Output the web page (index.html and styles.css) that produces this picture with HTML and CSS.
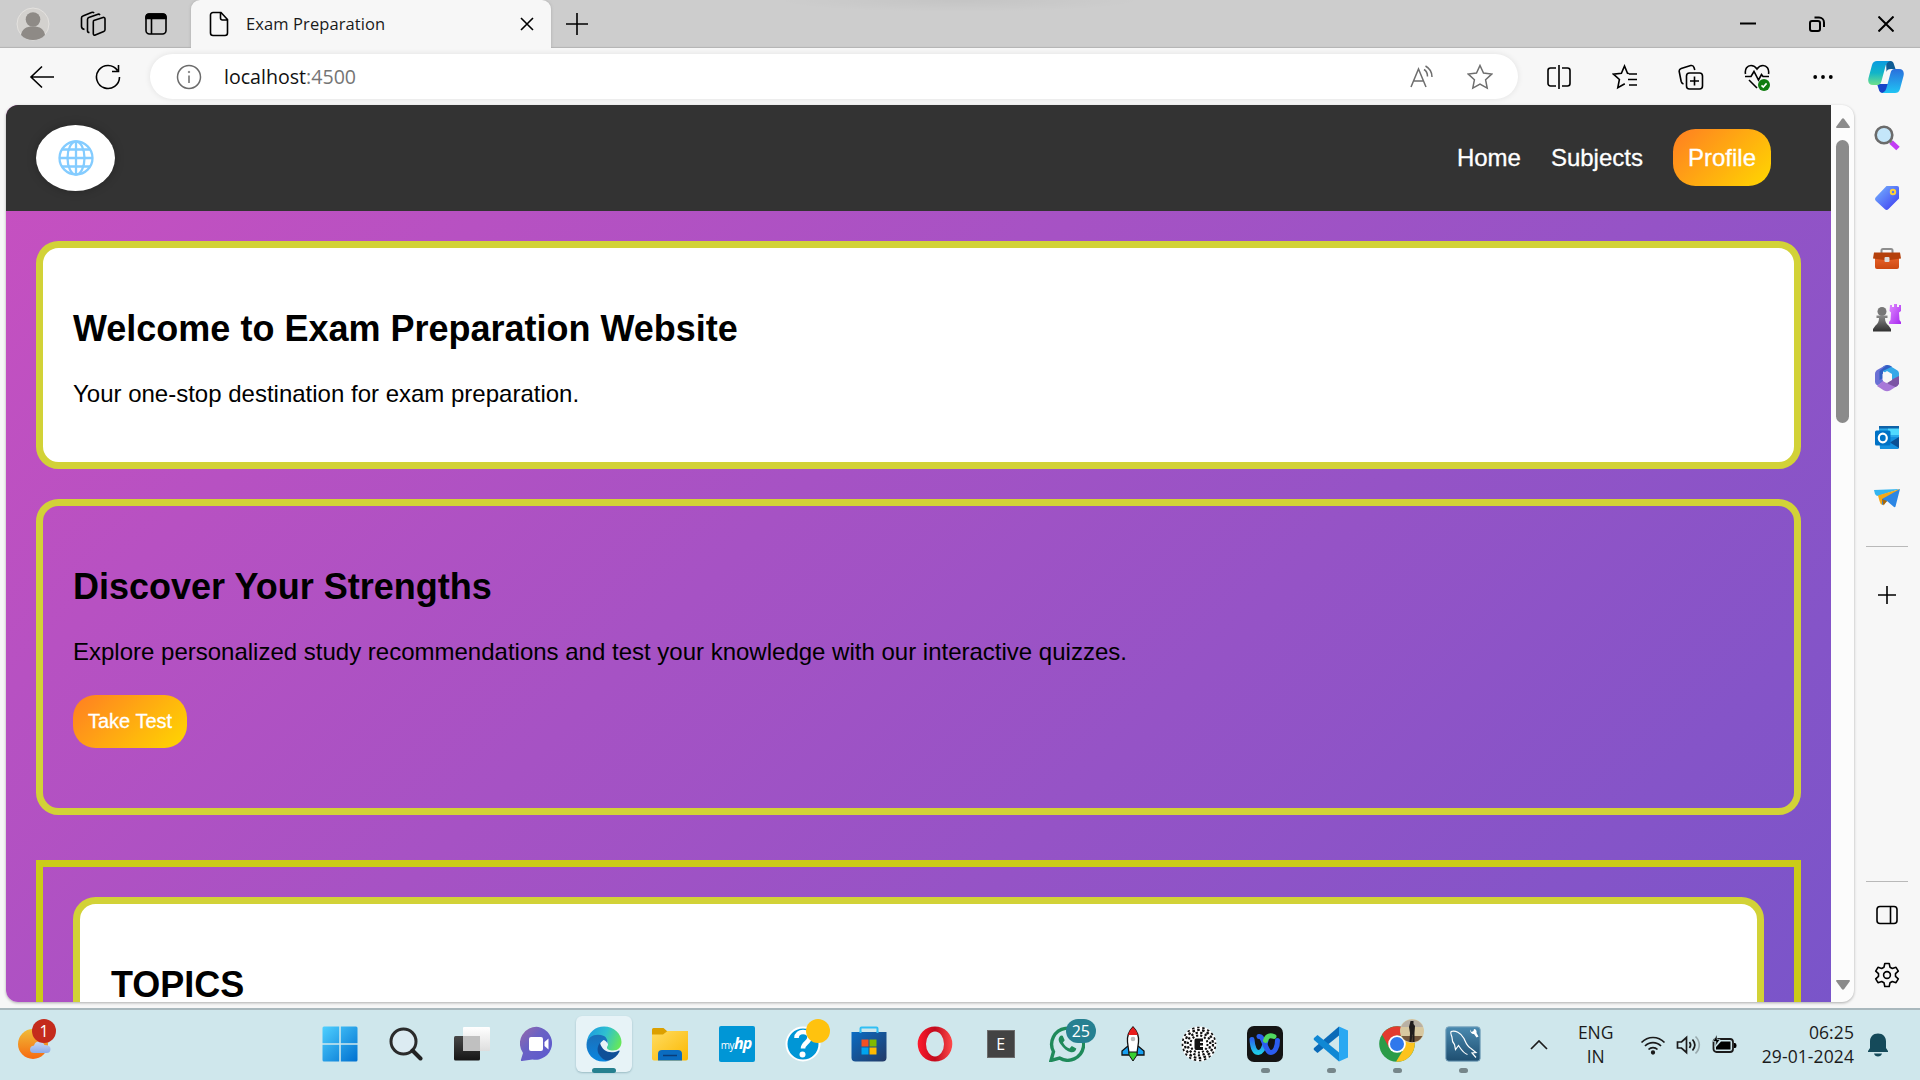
FILE: index.html
```html
<!DOCTYPE html>
<html lang="en">
<head>
<meta charset="utf-8">
<title>Exam Preparation</title>
<link rel="stylesheet" href="styles.css">
</head>
<body>
<svg class="defs" width="0" height="0">
  <defs>
    <linearGradient id="blueA" x1="0" y1="0" x2="1" y2="1"><stop offset="0" stop-color="#4fd0ff"/><stop offset="1" stop-color="#0070d0"/></linearGradient>
    <linearGradient id="tagG" x1="0" y1="0" x2="1" y2="1"><stop offset="0" stop-color="#78b8ff"/><stop offset="1" stop-color="#3a36f0"/></linearGradient>
    <linearGradient id="pinkG" x1="0" y1="0" x2="1" y2="1"><stop offset="0" stop-color="#e08cff"/><stop offset="1" stop-color="#a828f0"/></linearGradient>
    <linearGradient id="darkG" x1="0" y1="0" x2="0" y2="1"><stop offset="0" stop-color="#8a8a8a"/><stop offset="1" stop-color="#303030"/></linearGradient>
    <linearGradient id="redG" x1="0" y1="0" x2="0" y2="1"><stop offset="0" stop-color="#e8622a"/><stop offset="1" stop-color="#cc4810"/></linearGradient>
    <linearGradient id="copA" x1="0" y1="0" x2="0" y2="1"><stop offset="0" stop-color="#0a9be0"/><stop offset=".5" stop-color="#12b5c8"/><stop offset="1" stop-color="#6fe08a"/></linearGradient>
    <linearGradient id="copB" x1="0" y1="0" x2="0" y2="1"><stop offset="0" stop-color="#2a6fdc"/><stop offset="1" stop-color="#20c4f4"/></linearGradient>
    <linearGradient id="edgeG" x1="0" y1=".3" x2="1" y2=".6"><stop offset="0" stop-color="#1c9ae0"/><stop offset=".5" stop-color="#2fc0d0"/><stop offset="1" stop-color="#66e85a"/></linearGradient>
    <linearGradient id="edgeB" x1="0" y1="0" x2="0" y2="1"><stop offset="0" stop-color="#1b6fb8"/><stop offset="1" stop-color="#0a86e0"/></linearGradient>
    <linearGradient id="chatG" x1="0" y1="0" x2="1" y2="1"><stop offset="0" stop-color="#9a6aa8"/><stop offset=".4" stop-color="#6a62c4"/><stop offset="1" stop-color="#5a58d0"/></linearGradient>
    <linearGradient id="foldG" x1="0" y1="0" x2="1" y2="1"><stop offset="0" stop-color="#ffdc62"/><stop offset="1" stop-color="#fbb800"/></linearGradient>
    <linearGradient id="storeG" x1="0" y1="0" x2="1" y2="1"><stop offset="0" stop-color="#0a6cc4"/><stop offset="1" stop-color="#233a66"/></linearGradient>
    <linearGradient id="operaG" x1="0" y1="0" x2="1" y2="0"><stop offset="0" stop-color="#ff1b2d"/><stop offset=".5" stop-color="#c00a1c"/><stop offset="1" stop-color="#ff4a4a"/></linearGradient>
    <linearGradient id="sunG" x1="0" y1="0" x2="0" y2="1"><stop offset="0" stop-color="#f0bc38"/><stop offset="1" stop-color="#f66a10"/></linearGradient>
    <linearGradient id="cloudG" x1="0" y1="0" x2="0" y2="1"><stop offset="0" stop-color="#c8d8f4"/><stop offset="1" stop-color="#8cacea"/></linearGradient>
    <linearGradient id="tvG" x1="0" y1="0" x2="0" y2="1"><stop offset="0" stop-color="#484848"/><stop offset="1" stop-color="#151515"/></linearGradient>
    <linearGradient id="tvW" x1="0" y1="0" x2="0" y2="1"><stop offset="0" stop-color="#ffffff"/><stop offset="1" stop-color="#dedede"/></linearGradient>
    <linearGradient id="wbxG" x1="0" y1="0" x2="0" y2="1"><stop offset="0" stop-color="#2a66f0"/><stop offset="1" stop-color="#20c8e8"/></linearGradient>
    <linearGradient id="sqlG" x1="0" y1="0" x2="0" y2="1"><stop offset="0" stop-color="#4a8ab0"/><stop offset="1" stop-color="#1e4e70"/></linearGradient>
  </defs>
</svg>

<header class="titlebar">
  <div class="tb-cell tb-avatar">
    <svg width="34" height="34" viewBox="0 0 34 34"><circle cx="17" cy="17" r="16" fill="#d3d1ce" stroke="#e4e2df"/><circle cx="17" cy="12.500" r="7.300" fill="#8e8a86"/><path d="M5 28c1-6 5-8.500 12-8.500S28 22 29 28c-3 3.500-7 5-12 5s-9-1.500-12-5z" fill="#8e8a86"/></svg>
  </div>
  <div class="tb-cell tb-work">
    <svg class="line" width="26" height="26" viewBox="0 0 26 26"><path d="M13.800 9.500l9.200-3c1-.3 2 .3 2 1.300v11c0 .8-.5 1.500-1.300 1.800l-8.400 3.500c-1 .4-2-.2-2-1.300V11c0-.8 0-1.300.5-1.500zM9.500 21.500c-1.200 0-2-.7-2-1.800V8.500c0-1 .5-1.600 1.300-1.900L18 3.200c.8-.3 1.500.1 2 .8M4.500 18.500C2.500 18 1.500 17 1.500 15.500V7c0-1 .5-1.700 1.400-2l8.600-3.500c1-.4 2-.2 2.500.7"/></svg>
  </div>
  <div class="tb-cell tb-vert">
    <svg class="line" width="24" height="24" viewBox="0 0 24 24"><rect x="2" y="2" width="20" height="20" rx="3.500"/><path d="M2 6.500V5a3 3 0 0 1 3-3h14a3 3 0 0 1 3 3v1.500z" fill="#000"/><path d="M7.500 7v15"/></svg>
  </div>
  <div class="tab">
    <svg class="line" width="20" height="26" viewBox="0 0 20 26"><path d="M4 1.500h8l6.500 7V22a2.500 2.500 0 0 1-2.500 2.500H4A2.500 2.500 0 0 1 1.500 22V4A2.500 2.500 0 0 1 4 1.500zM11.500 2v5a2 2 0 0 0 2 2h5"/></svg>
    <span class="tab-title">Exam Preparation</span>
    <svg class="line tab-x" width="14" height="14" viewBox="0 0 14 14"><path d="M1 1l12 12M13 1L1 13"/></svg>
  </div>
  <svg class="line tb-plus" width="22" height="22" viewBox="0 0 22 22"><path d="M11 0v22M0 11h22"/></svg>
  <div class="top-shade"></div>
  <div class="win-controls">
    <div><svg class="line2" width="16" height="16" viewBox="0 0 16 16"><path d="M0 7.500h16"/></svg></div>
    <div><svg class="line2" width="16" height="16" viewBox="0 0 16 16"><rect x="1" y="5" width="10" height="10" rx="2"/><path d="M5.500 1.500H10a5 5 0 0 1 5 5V11"/></svg></div>
    <div><svg class="line2" width="16" height="16" viewBox="0 0 16 16"><path d="M.5.500l15 15M15.500.500l-15 15"/></svg></div>
  </div>
</header>

<div class="toolbar">
  <div class="tool back"><svg class="line" width="26" height="24" viewBox="0 0 26 24"><path d="M13 1.500L2 12l11 10.500M2 12h23"/></svg></div>
  <div class="tool"><svg class="line" width="26" height="26" viewBox="0 0 26 26"><path d="M22.500 6.500A11.500 11.500 0 1 0 24.500 13M23.500 1v6.500H17"/></svg></div>
  <div class="address">
    <svg width="26" height="26" viewBox="0 0 26 26" fill="none" stroke="#6b6b6b" stroke-width="1.500"><circle cx="13" cy="13" r="11.500"/><path d="M13 11.500v7.500"/><circle cx="13" cy="8" r=".8" fill="#6b6b6b" stroke-width=".6"/></svg>
    <span class="url">localhost<span class="port">:4500</span></span>
    <svg class="gray read" width="24" height="24" viewBox="0 0 24 24"><path d="M1 22L8.500 4 16 22M3.500 16h10M14 4.500c2.500 1.500 3.500 4 3.500 7M15.500 1c4.500 2.500 6.500 6.500 6.500 11"/></svg>
    <svg class="gray star" width="26" height="26" viewBox="0 0 26 26"><path d="M13 1.500l3.500 7.600 8.200 1-6.100 5.700 1.600 8.300L13 20l-7.200 4.100 1.600-8.300-6.100-5.700 8.200-1z"/></svg>
  </div>
  <div class="tool split"><svg class="line" width="24" height="26" viewBox="0 0 24 26"><path d="M12 1v24M9 4H3.500A2.500 2.500 0 0 0 1 6.500v13A2.500 2.500 0 0 0 3.500 22H9M15 4h5.500A2.500 2.500 0 0 1 23 6.500v13a2.500 2.500 0 0 1-2.500 2.500H15"/></svg></div>
  <div class="tool"><svg class="line" width="26" height="26" viewBox="0 0 26 26"><path d="M17 9.500l-1.500-.2L12.500 2 9.400 9.200l-7.900 1 5.900 5.300-1.600 8.200 7-4M17 10h8M16 15.500h9M17 21h8"/></svg></div>
  <div class="tool"><svg class="line" width="26" height="26" viewBox="0 0 26 26"><rect x="8.500" y="9" width="16" height="16" rx="3"/><path d="M16.500 12.500v9M12 17h9M5.500 20C4 19.500 3.500 18.500 3.200 17.500L1.200 7.500C1 6 1.800 4.800 3.200 4.400l9.500-2.800c1.500-.4 2.800.3 3.300 1.800L16.800 6"/></svg></div>
  <div class="tool"><svg class="line" width="26" height="28" viewBox="0 0 26 28"><path d="M1.500 11C.5 5.500 3.500 2.500 7 2.500c3 0 5 2 6 3.500 1-1.500 3-3.500 6-3.500 3.500 0 6.500 3 5.500 8.500M1 13.500h6l3-5 4.500 8.500 3-5.500 1.500 2h6M5 17l8 8"/><circle cx="20" cy="22" r="6" fill="#107c10" stroke="none"/><path d="M17.500 22.300l1.800 1.700 3.300-3.600" stroke="#fff"/></svg></div>
  <div class="tool"><svg width="20" height="6" viewBox="0 0 20 6"><circle cx="2.200" cy="3" r="1.900"/><circle cx="10" cy="3" r="1.900"/><circle cx="17.800" cy="3" r="1.900"/></svg></div>
  <div class="tool copilot"><svg width="36" height="34" viewBox="0 0 36 34"><path d="M9 24h12l-4 9h-2.500C11 33 11 29 9 24z" fill="#1744c8"/><path d="M18 1h4.500c2 0 3 1.500 3.500 3.500L27.500 9H23c-3 0-4 1-4.500 3z" fill="#0f5c94"/><path d="M9 1h13c-3 1-4 3-5 7l-3.500 13c-.6 2.500-2 4-4 4H5c-4 0-5.500-3-4.500-7L4 5c1-3 2.500-4 5-4z" fill="url(#copA)"/><path d="M27 33H14c3-1 4-3 5-7l3.500-13c.6-2.500 2-4 4-4H31c4 0 5.500 3 4.500 7L32 29c-1 3-2.500 4-5 4z" fill="url(#copB)"/></svg></div>
</div>

<div class="middle">
  <div class="viewport">
    <div class="page">
      <nav class="navbar">
        <div class="logo">
          <svg width="36" height="36" viewBox="0 0 36 36" fill="none" stroke="#84ccff" stroke-width="2.300"><circle cx="18" cy="18" r="16.500"/><ellipse cx="18" cy="18" rx="8.500" ry="16.500"/><path d="M18 1v34M1.500 18h33M4 9.500h28M4 26.500h28"/></svg>
        </div>
        <div class="links">
          <a>Home</a>
          <a>Subjects</a>
          <a class="profile">Profile</a>
        </div>
      </nav>
      <section class="card welcome">
        <h2>Welcome to Exam Preparation Website</h2>
        <p>Your one-stop destination for exam preparation.</p>
      </section>
      <section class="card discover">
        <h2>Discover Your Strengths</h2>
        <p>Explore personalized study recommendations and test your knowledge with our interactive quizzes.</p>
        <a class="take">Take Test</a>
      </section>
      <div class="topics-frame">
        <section class="card topics"><h2>TOPICS</h2></section>
      </div>
    </div>
    <div class="scrollbar">
      <svg width="14" height="10" viewBox="0 0 14 10"><path d="M0 9L5.800 1q1.200-1.500 2.400 0L14 9q0 1-1 1H1q-1 0-1-1z" fill="#8b8b8b"/></svg>
      <div class="thumb"></div>
      <svg class="down" width="14" height="10" viewBox="0 0 14 10"><path d="M0 1l5.800 8q1.200 1.500 2.400 0L14 1q0-1-1-1H1Q0 0 0 1z" fill="#8b8b8b"/></svg>
    </div>
  </div>
  <aside class="sidebar">
    <div><svg width="26" height="26" viewBox="0 0 26 26"><path d="M17 17l7 6.500" stroke="#c23cf4" stroke-width="5"/><path d="M14.500 14.500l3 3" stroke="#888" stroke-width="3"/><circle cx="10" cy="10" r="8.300" fill="#c4e6fa" stroke="#6b6b6b" stroke-width="2.600"/></svg></div>
    <div><svg width="26" height="26" viewBox="0 0 26 26"><path d="M12.500 1H23c1.500 0 2 .8 2 2v10.500L14.500 24c-1.300 1.300-2.500 1.300-3.800 0L2 16c-1.300-1.300-1.300-2.500 0-4z" fill="url(#tagG)"/><circle cx="19" cy="7" r="2.200" fill="none" stroke="#ffd23a" stroke-width="2"/></svg></div>
    <div><svg width="28" height="24" viewBox="0 0 28 24"><path d="M8.500 7V4.500Q8.500 3 10 3h8q1.500 0 1.500 1.500V7" fill="none" stroke="#8e8e8e" stroke-width="2"/><path d="M2 11h24v10q0 2-2 2H4q-2 0-2-2z" fill="url(#redG)"/><path d="M1 6.500h26l1 6-11 1.500h-6L0 12.500z" fill="#b5410c"/><rect x="11.500" y="11" width="5" height="5" rx="1" fill="#ddd"/></svg></div>
    <div><svg width="28" height="28" viewBox="0 0 28 28"><path d="M17 1h2v2h2V0h3v3h2V1h2v6l-2 1.500.500 7.500 1.500 2v2H16v-2l1.500-2L18 8.500 16.500 7z" fill="url(#pinkG)"/><circle cx="9" cy="7.500" r="4.500" fill="#777"/><path d="M3.500 11.500h11v2.500h-2.500c0 3.500 1 5.500 3.500 7.500l2.500 3.500v2.500H0V25l2.500-3.500C5 19.500 6 17.500 6 14H3.500z" fill="url(#darkG)"/></svg></div>
    <div><svg width="26" height="28" viewBox="0 0 26 28"><path d="M9 2.500q4-2.500 8 0l6.500 4Q25 7.500 25 9.500V19l-8-4v-4L9 7.500z" fill="#35a8e8"/><path d="M12 1L4 5.500Q1 7 1 10v8q0 2 2.500 3.500L9 18V8q0-4 5-7z" fill="#6a70d4"/><path d="M13 1q3 0 5 1.500L9 7v7l-3.500 2V7z" fill="#315fc4"/><path d="M25 13v6q0 2-2 3l-7 4.500q-3 1.500-6 0L3 22l6-5 5 3z" fill="#a878d8"/><path d="M25 12v7.500Q24 22 21.500 23L12 19l5-3z" fill="#7c54a4"/><path d="M8.500 10l4.500-3L18 10v6l-5 3-4.500-3z" fill="#f7f7f7"/></svg></div>
    <div><svg width="26" height="26" viewBox="0 0 26 26"><rect x="5" y="1" width="20" height="14" fill="#28a8ea"/><rect x="14" y="1" width="11" height="9" fill="#50d9ff"/><rect x="5" y="1" width="20" height="2.500" fill="#0f62a8"/><path d="M5 12h11l9 0v10.500q0 1.500-1.500 1.500H6z" fill="#1490df"/><path d="M25 12v11l-9-5.500z" fill="#0a4f94"/><rect x="1" y="5.500" width="15.500" height="15" rx="1.500" fill="#0072c6"/><ellipse cx="8.800" cy="13" rx="4" ry="4.400" fill="none" stroke="#fff" stroke-width="2.200"/></svg></div>
    <div><svg width="28" height="20" viewBox="0 0 28 20"><path d="M1 2L27 1 5 8q-2 0-3-2z" fill="#35b5f0"/><path d="M5 7.500L27 1 9.500 17Q7 16 6.500 13z" fill="#f4a818"/><path d="M27 1L9 11v6l5-4 7 6q1 .5 1.500-.5z" fill="#2c86e4"/><path d="M9 11l1.500 6.500L14 13z" fill="#a86808"/></svg></div>
    <hr>
    <div class="add"><svg class="line" width="18" height="18" viewBox="0 0 18 18"><path d="M9 0v18M0 9h18"/></svg></div>
    <span class="fill"></span>
    <hr>
    <div class="side-btm"><svg class="line" width="22" height="20" viewBox="0 0 22 20"><rect x="1" y="1.500" width="20" height="17" rx="3"/><path d="M14.500 1.500v17"/></svg></div>
    <div><svg class="line" width="26" height="26" viewBox="0 0 26 26"><circle cx="13" cy="13" r="3.400"/><path d="M10.800 1.500h4.400l.8 3.700 2.300 1.300 3.700-1.200 2.300 3.900-2.800 2.500v2.600l2.800 2.500-2.300 3.900-3.700-1.200-2.300 1.300-.8 3.700h-4.400l-.8-3.700-2.300-1.300L4 20.700l-2.300-3.900 2.800-2.500v-2.600L1.700 9.200 4 5.300l3.700 1.200L10 5.200z" stroke-linejoin="round"/></svg></div>
  </aside>
</div>

<footer class="taskbar">
  <div class="widgets">
    <svg width="36" height="34" viewBox="0 0 36 34"><circle cx="15" cy="17" r="15" fill="url(#sunG)"/><path d="M16 26q-4 0-4-3.500t4-4q1-4 5-4t5.500 3.500q6 0 6 4t-4 4z" fill="url(#cloudG)"/></svg>
    <span class="count">1</span>
  </div>
  <div class="apps">
    <div class="app"><svg width="36" height="36" viewBox="0 0 36 36"><path d="M2 .5h15.200v16.700H.5V2Q.5.500 2 .5zM18.800.5H34q1.500 0 1.500 1.500v15.200H18.800zM.5 18.800h16.700v16.700H2q-1.500 0-1.500-1.500zM18.800 18.800h16.700V34q0 1.500-1.500 1.500H18.800z" fill="url(#blueA)"/></svg></div>
    <div class="app"><svg width="34" height="34" viewBox="0 0 34 34"><circle cx="14.500" cy="14.500" r="12.500" fill="#dcebf2" stroke="#2b2b2b" stroke-width="3"/><path d="M23.500 23.500l8 8" stroke="#222" stroke-width="4" stroke-linecap="round"/></svg></div>
    <div class="app"><svg width="36" height="34" viewBox="0 0 36 34"><rect x="0" y="9" width="26" height="24.500" rx="1.500" fill="url(#tvG)"/><rect x="9" y="0" width="27" height="24" rx="1" fill="url(#tvW)"/><path d="M9 9h17v15H10q-1 0-1-1z" fill="#c0c0c0"/></svg></div>
    <div class="app"><svg width="36" height="36" viewBox="0 0 36 36"><path d="M18.500 1a16.500 16.500 0 1 1-6 32.500L2 35q-1.500 0-1-1.500L3 27A16.500 16.500 0 0 1 18.500 1z" fill="url(#chatG)"/><rect x="9" y="11" width="14" height="14" rx="2" fill="#fff"/><path d="M24.500 16l4-3.500v11l-4-3.500z" fill="#fff"/></svg></div>
    <div class="app active"><svg width="36" height="36" viewBox="0 0 36 36"><path d="M.5 17C2 6 9.500.5 18 .5 28 .5 35.500 8 35.500 16c0 5-3.500 8.500-8.500 8.500-4 0-6.500-1.500-6-3.500 2-2 1.500-7-4-8.500C9.500 10.500 3 13 .5 17z" fill="url(#edgeG)"/><path d="M18 10c-8-3-16 0-17.500 8C0 28 8 36 18 35.500c2 0 4-.3 5-1-7-1-10.500-6-10.500-11 0-5 3-8 5-9.500 2 .5 3.500 2 4 4 .5-4-1.500-7-3.500-8z" fill="url(#edgeB)"/><path d="M14 17c-3 3.500-3 8-1 11.500 2.500 4 6 6.500 10 6 5-1.500 8.500-5 10.500-9 .4-.8-.3-1.200-1-.8-8 3.500-16 1-18.500-7.700z" fill="#104f98"/></svg></div>
    <div class="app"><svg width="36" height="34" viewBox="0 0 36 34"><path d="M0 2.500Q0 1 1.500 1h10l4 3.500H34q2 0 2 2V10H0z" fill="#dca000"/><path d="M0 7.500h11L15.500 4H36v27.500q0 2-2 2H2q-2 0-2-2z" fill="url(#foldG)"/><path d="M6 33.500V27q0-4 4-4h16q4 0 4 4v6.500z" fill="#0a6cc0"/><path d="M11 28.500h14" stroke="#0a3c78" stroke-width="1.500"/></svg></div>
    <div class="app"><div class="myhp"><span>my</span><b>hp</b></div></div>
    <div class="app help"><svg width="36" height="36" viewBox="0 0 36 36"><circle cx="18" cy="18" r="16.500" fill="#0096d6" stroke="#fff" stroke-width="2"/><path d="M11.500 12c0-8 13-8 13-.5 0 5-6.500 5.500-6.500 11" fill="none" stroke="#fff" stroke-width="4.600"/><circle cx="17.500" cy="28.500" r="3" fill="#fff"/></svg><i class="dot"></i></div>
    <div class="app"><svg width="36" height="36" viewBox="0 0 36 36"><path d="M9.500 8V2.500q0-1 1-1h15q1 0 1 1V8" fill="none" stroke="#32c0f4" stroke-width="2"/><path d="M.5 6h35v25.500q0 4-4 4h-27q-4 0-4-4z" fill="url(#storeG)"/><path d="M9.500 7V5.500M26.500 7V5.500" stroke="#32c0f4" stroke-width="2"/><path d="M10.500 13.500h7v7h-7z" fill="#f25022"/><path d="M18.500 13.500h7v7h-7z" fill="#7fba00"/><path d="M10.500 21.500h7v7h-7z" fill="#00a4ef"/><path d="M18.500 21.500h7v7h-7z" fill="#ffb900"/></svg></div>
    <div class="app"><svg width="36" height="36" viewBox="0 0 36 36"><path fill-rule="evenodd" d="M18 .5a17.300 17.500 0 1 1 0 35 17.300 17.500 0 1 1 0-35zM18 5.500a9 12.500 0 1 0 0 25 9 12.500 0 1 0 0-25z" fill="url(#operaG)"/></svg></div>
    <div class="app"><span class="tile-e">E</span></div>
    <div class="app wa"><svg width="36" height="36" viewBox="0 0 36 36" fill="none"><path d="M2 34.500l2.500-8.800A16 16 0 1 1 10.500 32z" stroke="#1f8a5a" stroke-width="3.400"/><path d="M12 9.500c-3 2-3 5-.5 8.500 3 4.500 6.500 7.500 10.500 8.300 3 .4 5-1.300 5.300-3.800l-4.500-2.500-2.300 2.500c-3-1-5-3-6.500-6l1.700-2.200-2-4.600z" fill="#1f8a5a"/></svg><span class="count teal">25</span></div>
    <div class="app"><svg width="24" height="36" viewBox="0 0 24 36"><path d="M7 20l-6 5v4h7M17 20l6 5v4h-7" fill="#18a0f0" stroke="#111" stroke-width="1.300"/><path d="M12 1c-5 5-6 10-5.500 15L8 27h8l1.500-11C18 11 17 6 12 1z" fill="#fff" stroke="#111" stroke-width="1.300"/><path d="M12 1C9.500 3.500 8 6 7.200 9h9.600C16 6 14.500 3.500 12 1z" fill="#e81c1c"/><circle cx="12" cy="13" r="2.300" fill="#bbb"/><path d="M8 26h8v3l-4 6-4-6z" fill="#38d030" stroke="#111"/></svg></div>
    <div class="app"><svg width="36" height="36" viewBox="0 0 36 36"><circle cx="18" cy="18" r="17.500" fill="#fff"/><g fill="none" stroke="#111"><circle cx="18" cy="18" r="8.500" stroke-width="2" stroke-dasharray="2.100 2"/><circle cx="18" cy="18" r="11.300" stroke-width="2.200" stroke-dasharray="2.300 2.400" stroke-dashoffset="2.300"/><circle cx="18" cy="18" r="14" stroke-width="2.200" stroke-dasharray="2.600 2.300"/><circle cx="18" cy="18" r="16.500" stroke-width="1.700" stroke-dasharray="2.400 2.800" stroke-dashoffset="2.600"/></g><path d="M15 12.500h7v3h-3v1.500h3v2.500h-3V21h3v3h-7q-1.500 0-1.500-2v-7.500q0-2 1.500-2z" fill="#111"/></svg></div>
    <div class="app run"><svg width="36" height="36" viewBox="0 0 36 36"><rect width="36" height="36" rx="7" fill="#141414"/><g fill="none" stroke-width="5" stroke-linecap="round"><path d="M5 13.500c.5 8 3 13 6.500 13 4 0 6-6 7.500-12" stroke="url(#wbxG)"/><path d="M12 10.500c5-1 6.500 16 12 16 4 0 6.500-6 6.500-12" stroke="#2b5df0"/><path d="M18.500 14.500c1.500-4.500 4-5.500 8.500-4" stroke="#50d860"/></g></svg></div>
    <div class="app run"><svg width="36" height="36" viewBox="0 0 36 36"><path d="M26 .5l9 4v27l-9 4z" fill="#2aa8f2"/><path d="M26 .5v9L4.500 27 1 24q-.8-1 0-2z" fill="#0a6ab8"/><path d="M26 35.500v-9L4.500 9 1 12q-.8 1 0 2z" fill="#1088d4"/></svg></div>
    <div class="app run chrome"><svg width="36" height="36" viewBox="0 0 36 36"><circle cx="18" cy="18" r="17.800" fill="#2a9c48"/><path d="M3 8.500A17.800 17.800 0 0 1 33.500 9.500H18l-8 12z" fill="#e23a2e"/><path d="M33.500 9.500A17.800 17.800 0 0 1 17 35.800l8-13.300-2-13z" fill="#fcc31e"/><circle cx="18" cy="18" r="8.800" fill="#fff"/><circle cx="18" cy="18" r="7" fill="#2f78ec"/></svg>
      <svg class="mini" width="24" height="24" viewBox="0 0 24 24"><circle cx="12" cy="12" r="12" fill="#d8c8a0"/><path d="M1 8a12 12 0 0 1 22 0z" fill="#b8b0a4"/><path d="M1.500 17h21a12 12 0 0 1-21 0z" fill="#75583c"/><path d="M10.500 2h3v3l1.500 2-.5 7v9h-2v-8l-1 8h-2l.5-9-1-6z" fill="#201c1c"/></svg></div>
    <div class="app run"><svg width="36" height="36" viewBox="0 0 36 36"><rect x=".8" y=".8" width="34.400" height="34.400" rx="3" fill="url(#sqlG)" stroke="#7fa8c0"/><path d="M6 5.500c4-1.500 10 1 13 7 2 4.500 3 8 7 10l5 4-4 .5 4 4.500M6 5.500c-1 3 1 4 1 6 0 3 .5 5 2.500 7l1 5 3-4c2 3 5 8 9 9" fill="none" stroke="#fff" stroke-width="1.200"/><path d="M25 3.500l1.500 2.500 2-1 .5-2c2 0 3 2 2.500 4l2 3.500-2 1-2.500-3.500c-2 .5-4-2-4-4.500z" fill="#fff"/></svg></div>
  </div>
  <div class="tray">
    <svg class="tline chev" width="18" height="10" viewBox="0 0 18 10"><path d="M1 9l8-8 8 8"/></svg>
    <div class="lang">ENG<br>IN</div>
    <svg class="tline wifi" width="26" height="20" viewBox="0 0 26 20"><path d="M1.500 7.500C8 .8 18 .8 24.500 7.500M5 11c4.500-4.600 11.500-4.600 16 0M8.500 14.500c2.500-2.600 6.500-2.600 9 0"/><circle cx="13" cy="17.500" r="1.300" fill="#1b1b1b"/></svg>
    <svg class="tline vol" width="25" height="20" viewBox="0 0 25 20"><path d="M1.500 7v6h4l5 4.500V2.500L5.500 7zM13.500 7c1.500 2 1.500 4 0 6M16.500 4.500c3 3.500 3 7.500 0 11"/><path d="M19.500 1.500c5 5 5 12 0 17" opacity=".3"/></svg>
    <svg class="bat" width="25" height="20" viewBox="0 0 25 20"><rect x="1.500" y="4" width="19.500" height="13" rx="3" fill="none" stroke="#1b1b1b" stroke-width="1.800"/><path d="M22 8h1q1.500 0 1.500 2.500T23 13h-1z"/><path d="M4 14.500V12l5-5.500h9.500v8z"/><path d="M5-.5L1 6.500h3l-1 5 5-7H5z" stroke="#cfe7ec" stroke-width=".6"/></svg>
    <div class="clock">06:25<br>29-01-2024</div>
    <svg class="bell" width="20" height="24" viewBox="0 0 20 24"><path d="M10 .5c5 0 8 3.500 8 8V15l2 3v1H0v-1l2-3V8.500C2 4 5 .5 10 .5zM6 20.500h8c-.5 2-2 3-4 3s-3.500-1-4-3z" fill="#154a5a"/></svg>
  </div>
</footer>
</body>
</html>
```
FILE: styles.css
```css
* { box-sizing: border-box; }
body {
  margin: 0;
  width: 1920px;
  height: 1080px;
  overflow: hidden;
  display: flex;
  flex-direction: column;
  background: #f7f7f7;
  font-family: "Open Sans", "Noto Sans", sans-serif;
}
svg { display: block; flex: none; }
.defs { position: absolute; }
.line { fill: none; stroke: #000; stroke-width: 1.6; }
.line2 { fill: none; stroke: #000; stroke-width: 2; }
.gray { fill: none; stroke: #6e6e6e; stroke-width: 1.5; }
.tline { fill: none; stroke: #1b1b1b; stroke-width: 1.7; }

/* title bar */
.titlebar {
  height: 48px;
  flex: none;
  display: flex;
  align-items: center;
  background: #cdcdcd;
  box-shadow: inset 0 -2px 1px -1px #b4b4b4;
}
.tb-cell { display: flex; justify-content: center; }
.tb-avatar { width: 66px; }
.tb-work { width: 54px; }
.tb-vert { width: 71px; padding-left: 1px; }
.tab {
  width: 360px;
  height: 48px;
  display: flex;
  align-items: center;
  padding: 0 17px 0 18px;
  background: #f7f7f7;
  border-radius: 9px 9px 0 0;
  box-shadow: 0 0 3px #aaa;
  clip-path: inset(0 -4px 0 -4px);
}
.tab-title {
  margin-left: 17px;
  font-size: 16.5px;
  line-height: 24px;
  letter-spacing: 0.1px;
  color: #1a1a1a;
}
.tab-x { margin-left: auto; }
.tb-plus { margin-left: 15px; }
.top-shade {
  width: 370px;
  height: 12px;
  margin-left: 186px;
  align-self: flex-start;
  background: radial-gradient(ellipse 50% 100% at 50% 0, rgba(0,0,0,.045), rgba(0,0,0,0));
}
.win-controls { display: flex; margin-left: auto; }
.win-controls div { width: 69px; display: flex; justify-content: center; }

/* toolbar */
.toolbar { height: 57px; flex: none; display: flex; align-items: center; }
.tool { width: 66px; display: flex; justify-content: center; }
.tool.back { width: 75px; padding-left: 9px; }
.address {
  width: 1368px;
  height: 45px;
  margin-left: 9px;
  display: flex;
  align-items: center;
  padding: 0 25px 0 26px;
  background: #fff;
  border-radius: 23px;
  box-shadow: 0 0 6px rgba(0,0,0,.09);
}
.url { margin-left: 22px; font-size: 19.6px; line-height: 28px; color: #111; }
.port { color: #757575; }
.read { margin-left: auto; margin-right: 33px; }
.tool.split { margin-left: 8px; }
.tool.copilot { width: 60px; }

/* web page area */
.middle { height: 903px; flex: none; display: flex; }
.viewport {
  width: 1848px;
  height: 897px;
  margin-left: 6px;
  display: flex;
  overflow: hidden;
  background: #fcfcfc;
  border-radius: 12px;
  box-shadow: 0 1px 3px rgba(0,0,0,.3);
}
.page {
  width: 1825px;
  background: linear-gradient(135deg, #c850c0, #4158d0) 0 0 / 100% 2865px no-repeat;
  font-family: "Liberation Sans", Arial, sans-serif;
}
.navbar {
  height: 106px;
  padding: 0 60px 0 30px;
  display: flex;
  align-items: center;
  justify-content: space-between;
  background: #333;
}
.logo {
  width: 79px;
  height: 66px;
  display: flex;
  align-items: center;
  justify-content: center;
  padding-bottom: 1px;
  background: #fff;
  border-radius: 50%;
  box-shadow: 0 0 10px rgba(0,0,0,.25);
}
.links {
  display: flex;
  align-items: center;
  gap: 30px;
  padding-bottom: 2px;
  font-size: 24px;
  color: #fff;
  -webkit-text-stroke: 0.3px #fff;
}
.links a { padding-top: 1px; }
.profile, .take {
  background: linear-gradient(135deg, #ff7e22, #ffd700);
  color: #fff;
  border-radius: 22.5px;
}
.links .profile { padding: 0 15px; height: 57px; line-height: 57px; }
.card {
  border: 7px solid #d2d237;
  border-radius: 22.5px;
  padding: 30px;
}
.card h2 { margin: 30px 0; font-size: 36px; line-height: 42px; }
.card p { margin: 0; font-size: 24px; line-height: 28px; }
.welcome { height: 228px; margin: 30px 30px 0; background: #fff; }
.discover { height: 316px; margin: 30px 30px 0; }
.take {
  display: block;
  width: 114px;
  height: 53px;
  margin-top: 29px;
  line-height: 53px;
  text-align: center;
  font-size: 20px;
  -webkit-text-stroke: 0.3px #fff;
}
.topics-frame {
  height: 400px;
  margin: 45px 30px 0;
  padding: 30px;
  border: 7px solid #cbcb18;
}
.topics { height: 300px; background: #fff; }
.card.topics h2 { margin: 33px 0 0 1px; line-height: 36px; }

.scrollbar {
  width: 23px;
  padding: 13px 0 12px;
  display: flex;
  flex-direction: column;
  align-items: center;
}
.thumb { width: 13px; height: 283px; margin-top: 12px; border-radius: 7px; background: #8b8b8b; }
.down { margin-top: auto; }

/* edge sidebar */
.sidebar { width: 66px; padding-top: 3px; display: flex; flex-direction: column; }
.sidebar div { height: 60px; flex: none; display: flex; align-items: center; justify-content: center; }
.sidebar hr { width: 42px; height: 1px; margin: 18px auto 18px; border: 0; background: #b9b9b9; }
.sidebar .add { padding-right: 1px; }
.sidebar .fill { flex: 1; }
.sidebar .fill + hr { margin: 0 auto 3px; }
.sidebar div:last-child { margin-bottom: 3px; }

/* taskbar */
.taskbar {
  height: 72px;
  flex: none;
  display: flex;
  border-top: 2px solid #a9b8bd;
  background: #cfe7ec;
}
.widgets { width: 307px; padding: 17px 0 0 18px; position: relative; }
.count {
  position: absolute;
  left: 32px;
  top: 9px;
  width: 24px;
  height: 24px;
  border-radius: 12px;
  background: #c42b1c;
  color: #fff;
  font-size: 16px;
  line-height: 24px;
  text-align: center;
}
.apps { display: flex; padding-top: 6px; }
.app {
  width: 66.08px;
  height: 56px;
  display: flex;
  align-items: center;
  justify-content: center;
  position: relative;
}
.active::before {
  content: "";
  position: absolute;
  left: 5px;
  top: 0;
  width: 56px;
  height: 56px;
  border-radius: 6px;
  background: #e7f3f7;
  box-shadow: 0 1px 2px rgba(0,60,80,.25);
}
.active svg { position: relative; }
.active::after, .run::after {
  content: "";
  position: absolute;
  bottom: -1px;
  left: 50%;
  width: 24px;
  height: 5px;
  margin-left: -12px;
  border-radius: 3px;
  background: #26808f;
}
.run::after { width: 9px; margin-left: -4px; background: #76868a; }
.myhp {
  width: 36px;
  height: 36px;
  display: flex;
  align-items: baseline;
  justify-content: center;
  border-radius: 2px;
  background: #0096d6;
  color: #fff;
  font-size: 10px;
  line-height: 34px;
  letter-spacing: -0.5px;
}
.myhp b { font-size: 16px; font-style: italic; letter-spacing: -1px; padding-right: 1px; }
.dot {
  position: absolute;
  left: 36px;
  top: 3px;
  width: 24px;
  height: 24px;
  border-radius: 50%;
  background: #ffc20e;
}
.tile-e {
  width: 28px;
  height: 28px;
  background: #434343;
  border: 1px solid #6c6c6c;
  color: #fff;
  font-size: 16px;
  line-height: 27px;
  text-align: center;
}
.count.teal { left: 32px; top: 3px; width: 30px; background: #268091; }
.mini { position: absolute; left: 36px; top: 3px; }

.tray {
  display: flex;
  align-items: center;
  margin-left: auto;
  padding: 0 32px 1px 0;
  color: #1b1b1b;
  font-size: 17.5px;
  line-height: 24px;
}
.lang { width: 60px; margin-left: 18px; text-align: center; }
.wifi { margin-left: 14px; }
.vol { margin-left: 10px; }
.bat { margin-left: 11px; }
.clock { margin: -2px 0 0 25px; text-align: right; letter-spacing: 0.1px; }
.lang { margin-top: -1px; }
.bell { margin-left: 14px; }
```
